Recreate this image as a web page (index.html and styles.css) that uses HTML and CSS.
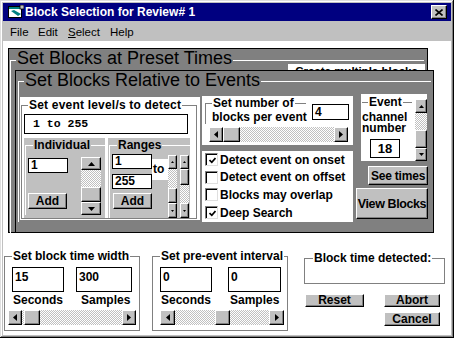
FILE: index.html
```html
<!DOCTYPE html>
<html lang="en">

<head>
    <meta charset="UTF-8">
    <title>Block Selection for Review# 1</title>
    <link rel="stylesheet" href="styles.css">
</head>

<body>
    <div class="window">
        <!-- title bar -->
        <div class="titlebar">
            <svg class="app-icon" width="16" height="14" viewBox="0 0 16 14">
                <rect x="0.5" y="1.5" width="13" height="11" fill="#fff" stroke="#000"/>
                <rect x="1" y="2" width="12" height="2" fill="#008080"/>
                <path d="M3 6 L10 11 L13 9 L6 5 Z" fill="#008080"/>
                <rect x="12" y="0" width="4" height="4" fill="#c0c0c0" stroke="#000" stroke-width="0.8"/>
            </svg>
            <span class="title">Block Selection for Review# 1</span>
            <div class="btn close">
                <svg width="8" height="7" viewBox="0 0 8 7"><path d="M0.5 0.5 L7.5 6.5 M7.5 0.5 L0.5 6.5" stroke="#000" stroke-width="1.6"/></svg>
            </div>
        </div>
        <!-- menu -->
        <div class="menubar">
            <span class="m-file">File</span>
            <span class="m-edit">Edit</span>
            <span class="m-select"><u>S</u>elect</span>
            <span>Help</span>
        </div>

        <div class="client">
            <div class="panel preset">
                <fieldset class="panel-frame preset-frame">
                    <legend>Set Blocks at Preset Times</legend>
                    <div class="preset-row"><div class="multi-btn">Create multiple blocks</div></div>

                    <div class="panel relative">
                        <fieldset class="panel-frame relative-frame">
                            <legend>Set Blocks Relative to Events</legend>
                            <div class="event-row">

                                <!-- event levels -->
                                <div class="box level-box">
                                    <fieldset class="grp level-grp">
                                        <legend>Set event level/s to detect</legend>
                                        <div class="tb level-text">1 to 255</div>
                                        <div class="ranges-row">
                                            <div class="subbox ind-box">
                                                <fieldset class="subgrp">
                                                    <legend>Individual</legend>
                                                    <div class="ind-body">
                                                        <div class="ind-left">
                                                            <div class="tb tb-small ind-tb">1</div>
                                                            <div class="btn add-btn ind-add">Add</div>
                                                        </div>
                                                        <div class="vscroll vs-ind">
                                                            <div class="btn sb-up"><svg width="7" height="4"><polygon points="0,4 7,4 3.5,0"/></svg></div>
                                                            <div class="track t1"></div>
                                                            <div class="btn thumb th1"></div>
                                                            <div class="btn sb-dn"><svg width="7" height="4"><polygon points="0,0 7,0 3.5,4"/></svg></div>
                                                        </div>
                                                    </div>
                                                </fieldset>
                                            </div>
                                            <div class="subbox rng-box">
                                                <fieldset class="subgrp">
                                                    <legend>Ranges</legend>
                                                    <div class="rng-body">
                                                        <div class="rng-left">
                                                            <div class="tb tb-small rng-tb1">1</div>
                                                            <div class="tb tb-small rng-tb2">255</div>
                                                            <div class="btn add-btn rng-add">Add</div>
                                                        </div>
                                                        <div class="to-label">to</div>
                                                        <div class="vscroll vs-rng">
                                                            <div class="btn sb-up"><svg width="3" height="2"><polygon points="0,2 3,2 1.5,0"/></svg></div>
                                                            <div class="track r1a"></div>
                                                            <div class="btn thumb r1b"></div>
                                                            <div class="btn sb-dn"><svg width="3" height="2"><polygon points="0,0 3,0 1.5,2"/></svg></div>
                                                        </div>
                                                        <div class="vscroll vs-rng vs-rng2">
                                                            <div class="btn sb-up"><svg width="3" height="2"><polygon points="0,2 3,2 1.5,0"/></svg></div>
                                                            <div class="btn thumb r2a"></div>
                                                            <div class="track r2b"></div>
                                                            <div class="btn sb-dn"><svg width="3" height="2"><polygon points="0,0 3,0 1.5,2"/></svg></div>
                                                        </div>
                                                    </div>
                                                </fieldset>
                                            </div>
                                        </div>
                                    </fieldset>
                                </div>

                                <!-- blocks per event + options -->
                                <div class="mid-col">
                                    <div class="box blocks-box">
                                        <div class="blocks-top">
                                            <fieldset class="grp blocks-grp">
                                                <legend>Set number of</legend>
                                                <div class="nowrap">blocks per event</div>
                                            </fieldset>
                                            <div class="tb blocks-tb">4</div>
                                        </div>
                                        <div class="hscroll hs-blocks">
                                            <div class="btn sb-h"><svg width="4" height="7"><polygon points="4,0 4,7 0,3.5"/></svg></div>
                                            <div class="btn thumb hb-thumb"></div>
                                            <div class="track grow"></div>
                                            <div class="btn sb-h"><svg width="4" height="7"><polygon points="0,0 0,7 4,3.5"/></svg></div>
                                        </div>
                                    </div>
                                    <div class="box checks-box">
                                        <div class="check-row"><span class="chk"><svg width="7" height="7"><polyline points="0.5,3 2.8,5.3 6.5,1" fill="none" stroke="#000" stroke-width="1.7"/></svg></span>Detect event on onset</div>
                                        <div class="check-row"><span class="chk"></span>Detect event on offset</div>
                                        <div class="check-row"><span class="chk"></span>Blocks may overlap</div>
                                        <div class="check-row"><span class="chk"><svg width="7" height="7"><polyline points="0.5,3 2.8,5.3 6.5,1" fill="none" stroke="#000" stroke-width="1.7"/></svg></span>Deep Search</div>
                                    </div>
                                </div>

                                <!-- channel -->
                                <div class="right-col">
                                    <div class="box event-box">
                                        <fieldset class="grp event-grp">
                                            <legend>Event</legend>
                                            <div class="event-label">channel</div>
                                            <div class="event-label">number</div>
                                            <div class="tb chan-tb">18</div>
                                        </fieldset>
                                        <div class="vscroll vs-chan">
                                            <div class="btn sb-up"><svg width="5" height="3"><polygon points="0,3 5,3 2.5,0"/></svg></div>
                                            <div class="track c1"></div>
                                            <div class="btn thumb c2"></div>
                                            <div class="btn sb-dn"><svg width="5" height="3"><polygon points="0,0 5,0 2.5,3"/></svg></div>
                                        </div>
                                    </div>
                                    <div class="btn see-btn">See times</div>
                                    <div class="btn view-btn">View Blocks</div>
                                </div>

                            </div>
                        </fieldset>
                    </div>
                </fieldset>
            </div>

            <div class="bottom-row">
                <fieldset class="grp bgrp width-grp">
                    <legend>Set block time width</legend>
                    <div class="pair">
                        <div class="tb tb-tall w52">15</div>
                        <div class="tb tb-tall w56">300</div>
                    </div>
                    <div class="pair-labels"><span class="lab1">Seconds</span><span>Samples</span></div>
                    <div class="hscroll hs-width">
                        <div class="btn sb-h"><svg width="4" height="7"><polygon points="4,0 4,7 0,3.5"/></svg></div>
                        <div class="track tw1"></div>
                        <div class="btn thumb tw2"></div>
                        <div class="track grow"></div>
                        <div class="btn sb-h"><svg width="4" height="7"><polygon points="0,0 0,7 4,3.5"/></svg></div>
                    </div>
                </fieldset>

                <fieldset class="grp bgrp pre-grp">
                    <legend>Set pre-event interval</legend>
                    <div class="pair">
                        <div class="tb tb-tall w52">0</div>
                        <div class="tb tb-tall w53">0</div>
                    </div>
                    <div class="pair-labels"><span class="lab2">Seconds</span><span>Samples</span></div>
                    <div class="hscroll hs-pre">
                        <div class="btn sb-h"><svg width="4" height="7"><polygon points="4,0 4,7 0,3.5"/></svg></div>
                        <div class="track tp1"></div>
                        <div class="btn thumb tp2"></div>
                        <div class="track grow"></div>
                        <div class="btn sb-h"><svg width="4" height="7"><polygon points="0,0 0,7 4,3.5"/></svg></div>
                    </div>
                </fieldset>

                <div class="action-col">
                    <fieldset class="grp detected-grp">
                        <legend>Block time detected:</legend>
                    </fieldset>
                    <div class="actions">
                        <div class="btn act-btn">Reset</div>
                        <div class="btn act-btn">Abort</div>
                        <div class="btn act-btn cancel-btn">Cancel</div>
                    </div>
                </div>
            </div>
        </div>
    </div>
</body>

</html>
```

FILE: styles.css
```css
* {
    box-sizing: border-box;
}

body {
    margin: 0;
    font-family: "Liberation Sans", Arial, sans-serif;
    font-size: 12px;
    font-weight: bold;
    color: #000;
}

/* window frame */
.window {
    width: 454px;
    height: 338px;
    padding: 3px;
    background: #c0c0c0;
    box-shadow: inset -1px -1px #000, inset 1px 1px #dfdfdf, inset -2px -2px #808080, inset 2px 2px #fff;
    display: flex;
    flex-direction: column;
}

.titlebar {
    height: 18px;
    background: #000080;
    color: #fff;
    display: flex;
    align-items: center;
    padding-left: 5px;
    flex: none;
}

.app-icon {
    flex: none;
}

.title {
    margin-left: 1px;
    line-height: 18px;
}

.close {
    width: 16px;
    height: 14px;
    margin-left: auto;
    margin-right: 4px;
}

.menubar {
    height: 19px;
    margin-top: 1px;
    display: flex;
    align-items: center;
    padding-left: 7px;
    font-weight: normal;
    font-size: 11.5px;
    flex: none;
}

.m-file { width: 28px; }
.m-edit { width: 30px; }
.m-select { width: 42px; }

.client {
    flex: 1;
    background: #fff;
    padding-left: 1px;
}

/* generic win95 bits */
.btn {
    background: #c0c0c0;
    border: 1px solid;
    border-color: #fff #000 #000 #fff;
    box-shadow: inset -1px -1px #808080;
    display: flex;
    align-items: center;
    justify-content: center;
    flex: none;
}

.track {
    background-color: #fff;
    background-image: conic-gradient(#c0c0c0 25%, #fff 0 50%, #c0c0c0 0 75%, #fff 0);
    background-size: 2px 2px;
    flex: none;
}

.grow {
    flex: 1;
}

.tb {
    background: #fff;
    border: 1px solid #000;
    flex: none;
}

.box {
    background: #fff;
    flex: none;
}

.nowrap {
    white-space: nowrap;
}

fieldset {
    margin: 0;
    padding: 0;
    border: 0;
    min-width: 0;
}

legend {
    padding: 0 1px;
    line-height: 14px;
    white-space: nowrap;
}

/* big dark panels */
.panel {
    background: #808080;
    border: 1px solid #000;
}

.preset {
    width: 420px;
    height: 185px;
    margin: 7px 0 0 4px;
}

.panel-frame {
    border-top: 1px solid #fff;
    border-left: 1px solid #fff;
}

.panel-frame > legend {
    font-size: 18px;
    font-weight: normal;
    line-height: 18px;
    padding: 0 1px 4px;
}

.preset-frame {
    margin: 0 3px 0 1px;
    padding-left: 5px;
}

.preset-row {
    height: 6px;
    margin: -7px -1px 0 0;
    overflow: hidden;
    display: flex;
    justify-content: flex-end;
}

.multi-btn {
    width: 137px;
    height: 20px;
    flex: none;
    background: #fff;
    text-align: center;
    font-size: 11.5px;
    line-height: 14px;
}

.relative {
    width: 419px;
    height: 163px;
    margin-left: -1px;
}

.relative-frame {
    margin: 0 2px;
    padding-left: 1px;
}

.relative-frame > legend {
    padding-bottom: 3px;
    margin-left: 4px;
}

.event-row {
    display: flex;
    align-items: flex-start;
    margin-top: 2px;
}

/* event level box */
.grp {
    border: 1px solid #808080;
}

.level-box {
    width: 180px;
    height: 123px;
    margin-top: 3px;
    padding: 1px 3px 1px 1px;
}

.level-grp {
    padding-left: 2px;
}

.level-grp > legend {
    margin-left: 4px;
    letter-spacing: 0.2px;
}

.level-text {
    width: 164px;
    height: 20px;
    margin-top: 2px;
    padding-left: 8px;
    font-family: "Liberation Mono", "Courier New", monospace;
    font-size: 11.5px;
    line-height: 18px;
}

.ranges-row {
    display: flex;
    gap: 3px;
    margin-top: 4px;
}

.subbox {
    height: 80px;
    background: #c0c0c0;
}

.ind-box { width: 81px; }
.rng-box { width: 82px; }

.subgrp {
    margin-left: 1px;
    padding-left: 2px;
    border-top: 1px solid #fff;
    border-left: 1px solid #fff;
}

.subgrp > legend {
    margin-left: 5px;
}

.tb-small {
    height: 15px;
    width: 40px;
    padding-left: 2px;
    line-height: 13px;
}

.add-btn {
    width: 39px;
    height: 16px;
}

.ind-body {
    display: flex;
    justify-content: space-between;
    padding-right: 4px;
}

.ind-tb { margin-top: 6px; }
.ind-add { margin-top: 20px; }

.vscroll {
    display: flex;
    flex-direction: column;
    flex: none;
}

.vs-ind {
    width: 20px;
    margin-top: 5px;
}

.vs-ind .sb-up { height: 13px; }
.vs-ind .t1 { height: 17px; }
.vs-ind .th1 { height: 15px; }
.vs-ind .sb-dn { height: 13px; }

.rng-body {
    display: flex;
    align-items: flex-start;
}

.rng-left {
    width: 40px;
    flex: none;
}

.rng-tb1 { margin-top: 2px; }
.rng-tb2 { margin-top: 5px; }
.rng-add { margin-top: 4px; margin-left: 1px; }

.to-label {
    width: 16px;
    height: 21px;
    margin-top: 7px;
    background: #fff;
    line-height: 21px;
    padding-left: 1px;
    flex: none;
}

.vs-rng {
    width: 9px;
    margin-top: 3px;
}

.vs-rng2 {
    margin-left: 3px;
}

.vs-rng .sb-up { height: 14px; }
.vs-rng .sb-dn { height: 15px; }
.r1a { height: 19px; }
.r1b { height: 15px; }
.r2a { height: 16px; }
.r2b { height: 18px; }

/* middle column */
.mid-col {
    width: 151px;
    margin: 2px 0 0 2px;
    display: flex;
    flex-direction: column;
    flex: none;
}

.blocks-box {
    height: 49px;
    padding: 0 4px 0 3px;
}

.blocks-top {
    display: flex;
    align-items: flex-start;
}

.blocks-grp {
    width: 101px;
    border-right: 0;
    border-bottom: 0;
    padding-left: 6px;
    flex: none;
}

.blocks-grp > legend {
    margin-left: 0;
}

.blocks-tb {
    width: 37px;
    height: 16px;
    margin: 8px 0 0 auto;
    padding-left: 2px;
    line-height: 14px;
}

.hscroll {
    display: flex;
    height: 15px;
}

.hscroll .sb-h {
    width: 14px;
}

.hs-blocks {
    width: 139px;
    margin: 3px 0 0 4px;
}

.hb-thumb { width: 17px; }

.checks-box {
    height: 71px;
    margin-top: 6px;
    padding-left: 3px;
}

.check-row {
    height: 17.6px;
    display: flex;
    align-items: center;
    white-space: nowrap;
}

.chk {
    width: 13px;
    height: 13px;
    margin-right: 2px;
    background: #fff;
    border: 1px solid;
    border-color: #808080 #dfdfdf #dfdfdf #808080;
    box-shadow: inset 1px 1px #000;
    display: flex;
    align-items: center;
    justify-content: center;
    padding: 1px 0 0 1px;
    flex: none;
}

/* right column */
.right-col {
    width: 72px;
    margin-left: 3px;
    display: flex;
    flex-direction: column;
    align-items: flex-end;
    flex: none;
}

.event-box {
    width: 66px;
    height: 67px;
    margin-right: 1px;
    padding: 1px 0 0 1px;
    display: flex;
    align-items: flex-start;
}

.event-grp {
    width: 50px;
    border-left: 0;
    border-right: 0;
    border-bottom: 0;
    flex: none;
}

.event-grp > legend {
    margin-left: 6px;
}

.event-label {
    line-height: 12px;
    height: 11px;
}

.event-label:first-of-type {
    margin-top: 2px;
}

.chan-tb {
    width: 30px;
    height: 19px;
    margin: 6px 0 0 8px;
    font-size: 13px;
    line-height: 17px;
    text-align: center;
}

.vs-chan {
    width: 12px;
    margin: 4px 0 0 3px;
}

.vs-chan .sb-up { height: 14px; }
.c1 { height: 17px; }
.c2 { height: 18px; }
.vs-chan .sb-dn { height: 13px; }

.see-btn {
    width: 60px;
    height: 19px;
    margin-top: 5px;
    letter-spacing: -0.2px;
}

.view-btn {
    width: 72px;
    height: 31px;
    margin-top: 3px;
    font-size: 12.5px;
    letter-spacing: -0.4px;
}

/* bottom area */
.bottom-row {
    display: flex;
    align-items: flex-start;
    margin-top: 16px;
}

.bgrp {
    width: 136px;
    padding: 0 2px 5px 7px;
    flex: none;
}

.width-grp {
    padding-left: 3px;
}

.width-grp > legend {
    margin-left: 4px;
}

.pre-grp {
    margin-left: 12px;
}

.pair {
    display: flex;
    margin-top: 4px;
}

.width-grp .pair {
    padding-left: 4px;
    gap: 12px;
}

.pre-grp .pair {
    gap: 16px;
}

.tb-tall {
    height: 25px;
    padding: 2px 0 0 2px;
    line-height: 14px;
}

.w52 { width: 52px; }
.w53 { width: 53px; }
.w56 { width: 56px; }

.pair-labels {
    display: flex;
    margin-top: 1px;
    line-height: 14px;
}

.width-grp .pair-labels { padding-left: 5px; }
.pre-grp .pair-labels { padding-left: 1px; }

.lab1 { width: 68px; }
.lab2 { width: 69px; }

.hscroll.hs-width,
.hscroll.hs-pre {
    margin-top: 3px;
}

.hs-width { width: 128px; }
.tw1 { width: 2px; }
.tw2 { width: 16px; }

.hs-pre { width: 124px; }
.hs-pre .sb-h { width: 15px; }
.tp1 { width: 40px; }
.tp2 { width: 15px; }

.action-col {
    width: 141px;
    margin: 2px 0 0 16px;
    flex: none;
}

.detected-grp {
    height: 33px;
    padding-left: 8px;
}

.actions {
    display: grid;
    grid-template-columns: 59px 56px;
    column-gap: 20px;
    row-gap: 5px;
    margin-top: 10px;
    padding-left: 1px;
}

.act-btn {
    height: 13px;
    line-height: 11px;
}

.cancel-btn {
    grid-column: 2;
    height: 14px;
}
```
